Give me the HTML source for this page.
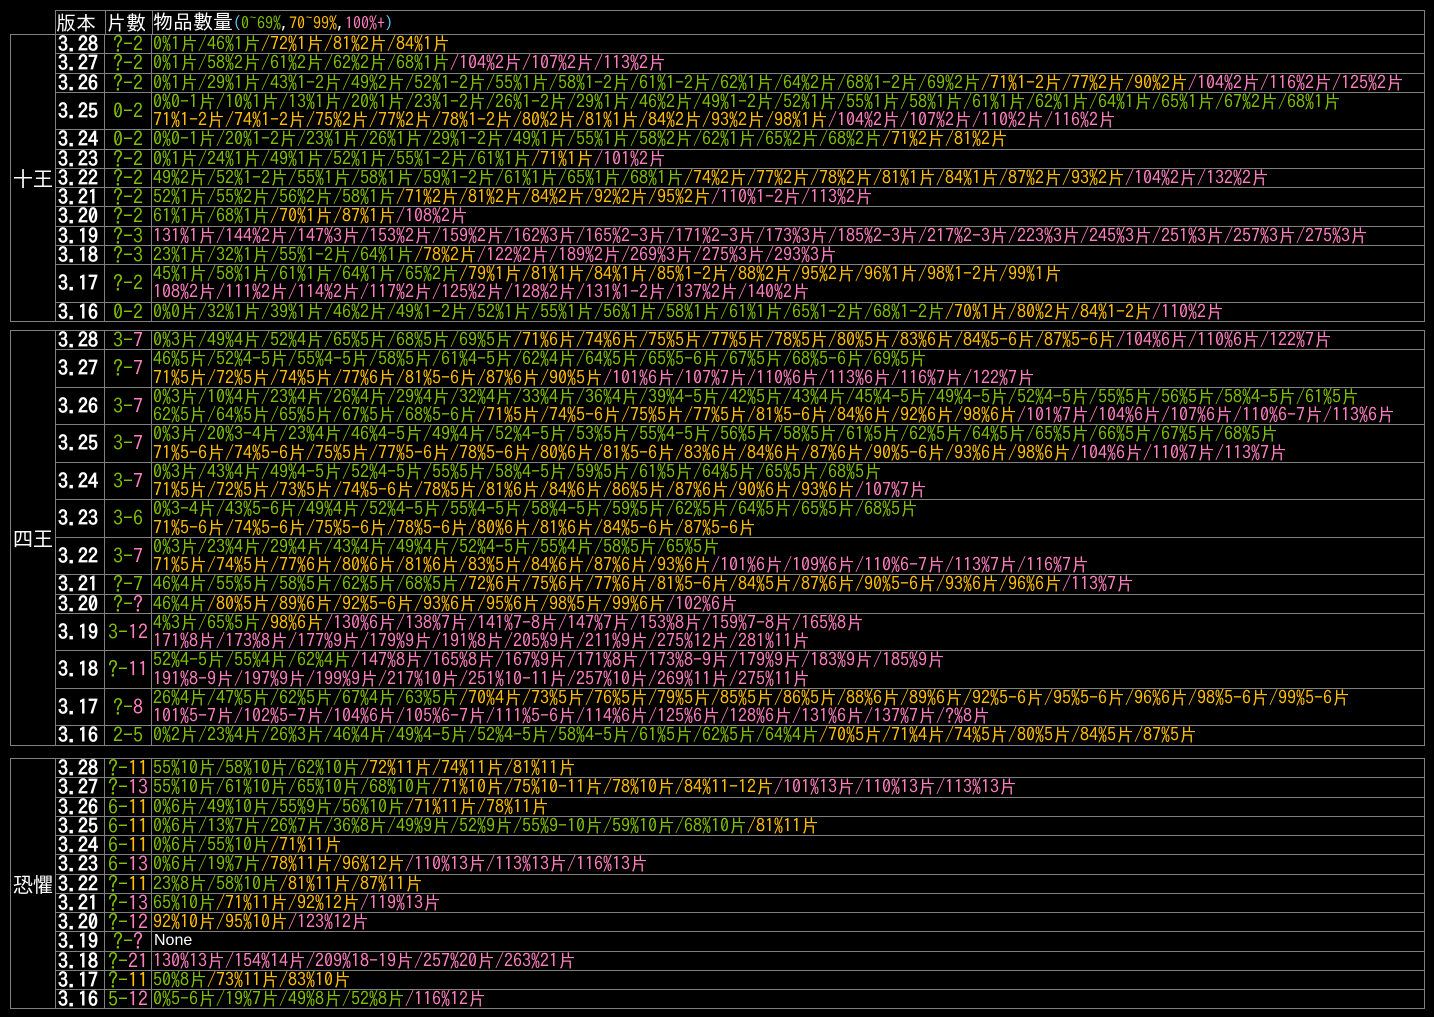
<!DOCTYPE html>
<html><head><meta charset="utf-8"><style>
html,body{margin:0;padding:0;background:#000;width:1434px;height:1017px;overflow:hidden}
body{font-family:"IPAGothic","Noto Sans CJK TC",monospace;color:#fff}
table{position:absolute;border-collapse:collapse;table-layout:fixed}
td{border:1px solid #808080;padding:0;white-space:nowrap;vertical-align:middle;overflow:hidden}
.sec{left:10px;width:1415px}
.sec td{font-size:18px;line-height:18.25px}
td.grp{width:44px;text-align:center;font-size:20px;font-family:"Noto Sans CJK TC","IPAGothic",sans-serif}
td.v{width:49px;font-size:20px;font-weight:bold;padding-left:2px;box-sizing:border-box}
td.pc{width:46px;text-align:center;font-size:20px;color:#80c000}
td.c{padding-left:1px}
.g{color:#80c000}.o{color:#ffc000}.p{color:#ff80c0}.cy{color:#60d0ff}
.hd{left:55px;top:10px;width:1370px}
.hd td{height:22px;font-size:20px;line-height:22px}
.hd .s{font-size:16px}
</style></head><body>
<table class="hd"><tr><td style="width:49px">版本</td><td style="width:46px">片數</td><td>物品數量<span class="s"><span class="cy">(</span><span class="g">0~69%</span>,<span class="o">70~99%</span>,<span class="p">100%+</span><span class="cy">)</span></span></td></tr></table>

<table class="sec" style="top:34px">
<tr><td class="grp" rowspan="13">十王</td><td class="v">3.28</td><td class="pc">?-2</td><td class="c"><span class="g">0%1片/46%1片</span><span class="o">/72%1片/81%2片/84%1片</span></td></tr>
<tr><td class="v">3.27</td><td class="pc">?-2</td><td class="c"><span class="g">0%1片/58%2片/61%2片/62%2片/68%1片</span><span class="p">/104%2片/107%2片/113%2片</span></td></tr>
<tr><td class="v">3.26</td><td class="pc">?-2</td><td class="c"><span class="g">0%1片/29%1片/43%1-2片/49%2片/52%1-2片/55%1片/58%1-2片/61%1-2片/62%1片/64%2片/68%1-2片/69%2片</span><span class="o">/71%1-2片/77%2片/90%2片</span><span class="p">/104%2片/116%2片/125%2片</span></td></tr>
<tr><td class="v">3.25</td><td class="pc">0-2</td><td class="c"><span class="g">0%0-1片/10%1片/13%1片/20%1片/23%1-2片/26%1-2片/29%1片/46%2片/49%1-2片/52%1片/55%1片/58%1片/61%1片/62%1片/64%1片/65%1片/67%2片/68%1片</span><br><span class="o">71%1-2片/74%1-2片/75%2片/77%2片/78%1-2片/80%2片/81%1片/84%2片/93%2片/98%1片</span><span class="p">/104%2片/107%2片/110%2片/116%2片</span></td></tr>
<tr><td class="v">3.24</td><td class="pc">0-2</td><td class="c"><span class="g">0%0-1片/20%1-2片/23%1片/26%1片/29%1-2片/49%1片/55%1片/58%2片/62%1片/65%2片/68%2片</span><span class="o">/71%2片/81%2片</span></td></tr>
<tr><td class="v">3.23</td><td class="pc">?-2</td><td class="c"><span class="g">0%1片/24%1片/49%1片/52%1片/55%1-2片/61%1片</span><span class="o">/71%1片</span><span class="p">/101%2片</span></td></tr>
<tr><td class="v">3.22</td><td class="pc">?-2</td><td class="c"><span class="g">49%2片/52%1-2片/55%1片/58%1片/59%1-2片/61%1片/65%1片/68%1片</span><span class="o">/74%2片/77%2片/78%2片/81%1片/84%1片/87%2片/93%2片</span><span class="p">/104%2片/132%2片</span></td></tr>
<tr><td class="v">3.21</td><td class="pc">?-2</td><td class="c"><span class="g">52%1片/55%2片/56%2片/58%1片</span><span class="o">/71%2片/81%2片/84%2片/92%2片/95%2片</span><span class="p">/110%1-2片/113%2片</span></td></tr>
<tr><td class="v">3.20</td><td class="pc">?-2</td><td class="c"><span class="g">61%1片/68%1片</span><span class="o">/70%1片/87%1片</span><span class="p">/108%2片</span></td></tr>
<tr><td class="v">3.19</td><td class="pc">?-3</td><td class="c"><span class="p">131%1片/144%2片/147%3片/153%2片/159%2片/162%3片/165%2-3片/171%2-3片/173%3片/185%2-3片/217%2-3片/223%3片/245%3片/251%3片/257%3片/275%3片</span></td></tr>
<tr><td class="v">3.18</td><td class="pc">?-3</td><td class="c"><span class="g">23%1片/32%1片/55%1-2片/64%1片</span><span class="o">/78%2片</span><span class="p">/122%2片/189%2片/269%3片/275%3片/293%3片</span></td></tr>
<tr><td class="v">3.17</td><td class="pc">?-2</td><td class="c"><span class="g">45%1片/58%1片/61%1片/64%1片/65%2片</span><span class="o">/79%1片/81%1片/84%1片/85%1-2片/88%2片/95%2片/96%1片/98%1-2片/99%1片</span><br><span class="p">108%2片/111%2片/114%2片/117%2片/125%2片/128%2片/131%1-2片/137%2片/140%2片</span></td></tr>
<tr><td class="v">3.16</td><td class="pc">0-2</td><td class="c"><span class="g">0%0片/32%1片/39%1片/46%2片/49%1-2片/52%1片/55%1片/56%1片/58%1片/61%1片/65%1-2片/68%1-2片</span><span class="o">/70%1片/80%2片/84%1-2片</span><span class="p">/110%2片</span></td></tr>
</table>

<table class="sec" style="top:330px">
<tr><td class="grp" rowspan="13">四王</td><td class="v">3.28</td><td class="pc">3-<span class="p">7</span></td><td class="c"><span class="g">0%3片/49%4片/52%4片/65%5片/68%5片/69%5片</span><span class="o">/71%6片/74%6片/75%5片/77%5片/78%5片/80%5片/83%6片/84%5-6片/87%5-6片</span><span class="p">/104%6片/110%6片/122%7片</span></td></tr>
<tr><td class="v">3.27</td><td class="pc">?-<span class="p">7</span></td><td class="c"><span class="g">46%5片/52%4-5片/55%4-5片/58%5片/61%4-5片/62%4片/64%5片/65%5-6片/67%5片/68%5-6片/69%5片</span><br><span class="o">71%5片/72%5片/74%5片/77%6片/81%5-6片/87%6片/90%5片</span><span class="p">/101%6片/107%7片/110%6片/113%6片/116%7片/122%7片</span></td></tr>
<tr><td class="v">3.26</td><td class="pc">3-<span class="p">7</span></td><td class="c"><span class="g">0%3片/10%4片/23%4片/26%4片/29%4片/32%4片/33%4片/36%4片/39%4-5片/42%5片/43%4片/45%4-5片/49%4-5片/52%4-5片/55%5片/56%5片/58%4-5片/61%5片</span><br><span class="g">62%5片/64%5片/65%5片/67%5片/68%5-6片</span><span class="o">/71%5片/74%5-6片/75%5片/77%5片/81%5-6片/84%6片/92%6片/98%6片</span><span class="p">/101%7片/104%6片/107%6片/110%6-7片/113%6片</span></td></tr>
<tr><td class="v">3.25</td><td class="pc">3-<span class="p">7</span></td><td class="c"><span class="g">0%3片/20%3-4片/23%4片/46%4-5片/49%4片/52%4-5片/53%5片/55%4-5片/56%5片/58%5片/61%5片/62%5片/64%5片/65%5片/66%5片/67%5片/68%5片</span><br><span class="o">71%5-6片/74%5-6片/75%5片/77%5-6片/78%5-6片/80%6片/81%5-6片/83%6片/84%6片/87%6片/90%5-6片/93%6片/98%6片</span><span class="p">/104%6片/110%7片/113%7片</span></td></tr>
<tr><td class="v">3.24</td><td class="pc">3-<span class="p">7</span></td><td class="c"><span class="g">0%3片/43%4片/49%4-5片/52%4-5片/55%5片/58%4-5片/59%5片/61%5片/64%5片/65%5片/68%5片</span><br><span class="o">71%5片/72%5片/73%5片/74%5-6片/78%5片/81%6片/84%6片/86%5片/87%6片/90%6片/93%6片</span><span class="p">/107%7片</span></td></tr>
<tr><td class="v">3.23</td><td class="pc">3-6</td><td class="c"><span class="g">0%3-4片/43%5-6片/49%4片/52%4-5片/55%4-5片/58%4-5片/59%5片/62%5片/64%5片/65%5片/68%5片</span><br><span class="o">71%5-6片/74%5-6片/75%5-6片/78%5-6片/80%6片/81%6片/84%5-6片/87%5-6片</span></td></tr>
<tr><td class="v">3.22</td><td class="pc">3-<span class="p">7</span></td><td class="c"><span class="g">0%3片/23%4片/29%4片/43%4片/49%4片/52%4-5片/55%4片/58%5片/65%5片</span><br><span class="o">71%5片/74%5片/77%6片/80%6片/81%6片/83%5片/84%6片/87%6片/93%6片</span><span class="p">/101%6片/109%6片/110%6-7片/113%7片/116%7片</span></td></tr>
<tr><td class="v">3.21</td><td class="pc">?-7</td><td class="c"><span class="g">46%4片/55%5片/58%5片/62%5片/68%5片</span><span class="o">/72%6片/75%6片/77%6片/81%5-6片/84%5片/87%6片/90%5-6片/93%6片/96%6片</span><span class="p">/113%7片</span></td></tr>
<tr><td class="v">3.20</td><td class="pc">?-<span class="p">?</span></td><td class="c"><span class="g">46%4片</span><span class="o">/80%5片/89%6片/92%5-6片/93%6片/95%6片/98%5片/99%6片</span><span class="p">/102%6片</span></td></tr>
<tr><td class="v">3.19</td><td class="pc">3-<span class="p">12</span></td><td class="c"><span class="g">4%3片/65%5片</span><span class="o">/98%6片</span><span class="p">/130%6片/138%7片/141%7-8片/147%7片/153%8片/159%7-8片/165%8片</span><br><span class="p">171%8片/173%8片/177%9片/179%9片/191%8片/205%9片/211%9片/275%12片/281%11片</span></td></tr>
<tr><td class="v">3.18</td><td class="pc">?-<span class="p">11</span></td><td class="c"><span class="g">52%4-5片/55%4片/62%4片</span><span class="p">/147%8片/165%8片/167%9片/171%8片/173%8-9片/179%9片/183%9片/185%9片</span><br><span class="p">191%8-9片/197%9片/199%9片/217%10片/251%10-11片/257%10片/269%11片/275%11片</span></td></tr>
<tr><td class="v">3.17</td><td class="pc">?-<span class="p">8</span></td><td class="c"><span class="g">26%4片/47%5片/62%5片/67%4片/63%5片</span><span class="o">/70%4片/73%5片/76%5片/79%5片/85%5片/86%5片/88%6片/89%6片/92%5-6片/95%5-6片/96%6片/98%5-6片/99%5-6片</span><br><span class="p">101%5-7片/102%5-7片/104%6片/105%6-7片/111%5-6片/114%6片/125%6片/128%6片/131%6片/137%7片/?%8片</span></td></tr>
<tr><td class="v">3.16</td><td class="pc">2-5</td><td class="c"><span class="g">0%2片/23%4片/26%3片/46%4片/49%4-5片/52%4-5片/58%4-5片/61%5片/62%5片/64%4片</span><span class="o">/70%5片/71%4片/74%5片/80%5片/84%5片/87%5片</span></td></tr>
</table>

<table class="sec" style="top:758px">
<tr><td class="grp" rowspan="13">恐懼</td><td class="v">3.28</td><td class="pc">?-<span class="o">11</span></td><td class="c"><span class="g">55%10片/58%10片/62%10片</span><span class="o">/72%11片/74%11片/81%11片</span></td></tr>
<tr><td class="v">3.27</td><td class="pc">?-<span class="p">13</span></td><td class="c"><span class="g">55%10片/61%10片/65%10片/68%10片</span><span class="o">/71%10片/75%10-11片/78%10片/84%11-12片</span><span class="p">/101%13片/110%13片/113%13片</span></td></tr>
<tr><td class="v">3.26</td><td class="pc">6-<span class="o">11</span></td><td class="c"><span class="g">0%6片/49%10片/55%9片/56%10片</span><span class="o">/71%11片/78%11片</span></td></tr>
<tr><td class="v">3.25</td><td class="pc">6-<span class="o">11</span></td><td class="c"><span class="g">0%6片/13%7片/26%7片/36%8片/49%9片/52%9片/55%9-10片/59%10片/68%10片</span><span class="o">/81%11片</span></td></tr>
<tr><td class="v">3.24</td><td class="pc">6-<span class="o">11</span></td><td class="c"><span class="g">0%6片/55%10片</span><span class="o">/71%11片</span></td></tr>
<tr><td class="v">3.23</td><td class="pc">6-<span class="p">13</span></td><td class="c"><span class="g">0%6片/19%7片</span><span class="o">/78%11片/96%12片</span><span class="p">/110%13片/113%13片/116%13片</span></td></tr>
<tr><td class="v">3.22</td><td class="pc">?-<span class="o">11</span></td><td class="c"><span class="g">23%8片/58%10片</span><span class="o">/81%11片/87%11片</span></td></tr>
<tr><td class="v">3.21</td><td class="pc">?-<span class="p">13</span></td><td class="c"><span class="g">65%10片</span><span class="o">/71%11片/92%12片</span><span class="p">/119%13片</span></td></tr>
<tr><td class="v">3.20</td><td class="pc">?-<span class="p">12</span></td><td class="c"><span class="o">92%10片/95%10片</span><span class="p">/123%12片</span></td></tr>
<tr><td class="v">3.19</td><td class="pc">?-<span class="p">?</span></td><td class="c" style="font-family:'Liberation Sans',sans-serif;font-size:16px;color:#fff;padding-left:2px">None</td></tr>
<tr><td class="v">3.18</td><td class="pc">?-<span class="p">21</span></td><td class="c"><span class="p">130%13片/154%14片/209%18-19片/257%20片/263%21片</span></td></tr>
<tr><td class="v">3.17</td><td class="pc">?-<span class="o">11</span></td><td class="c"><span class="g">50%8片</span><span class="o">/73%11片/83%10片</span></td></tr>
<tr><td class="v">3.16</td><td class="pc">5-<span class="p">12</span></td><td class="c"><span class="g">0%5-6片/19%7片/49%8片/52%8片</span><span class="p">/116%12片</span></td></tr>
</table>
</body></html>
